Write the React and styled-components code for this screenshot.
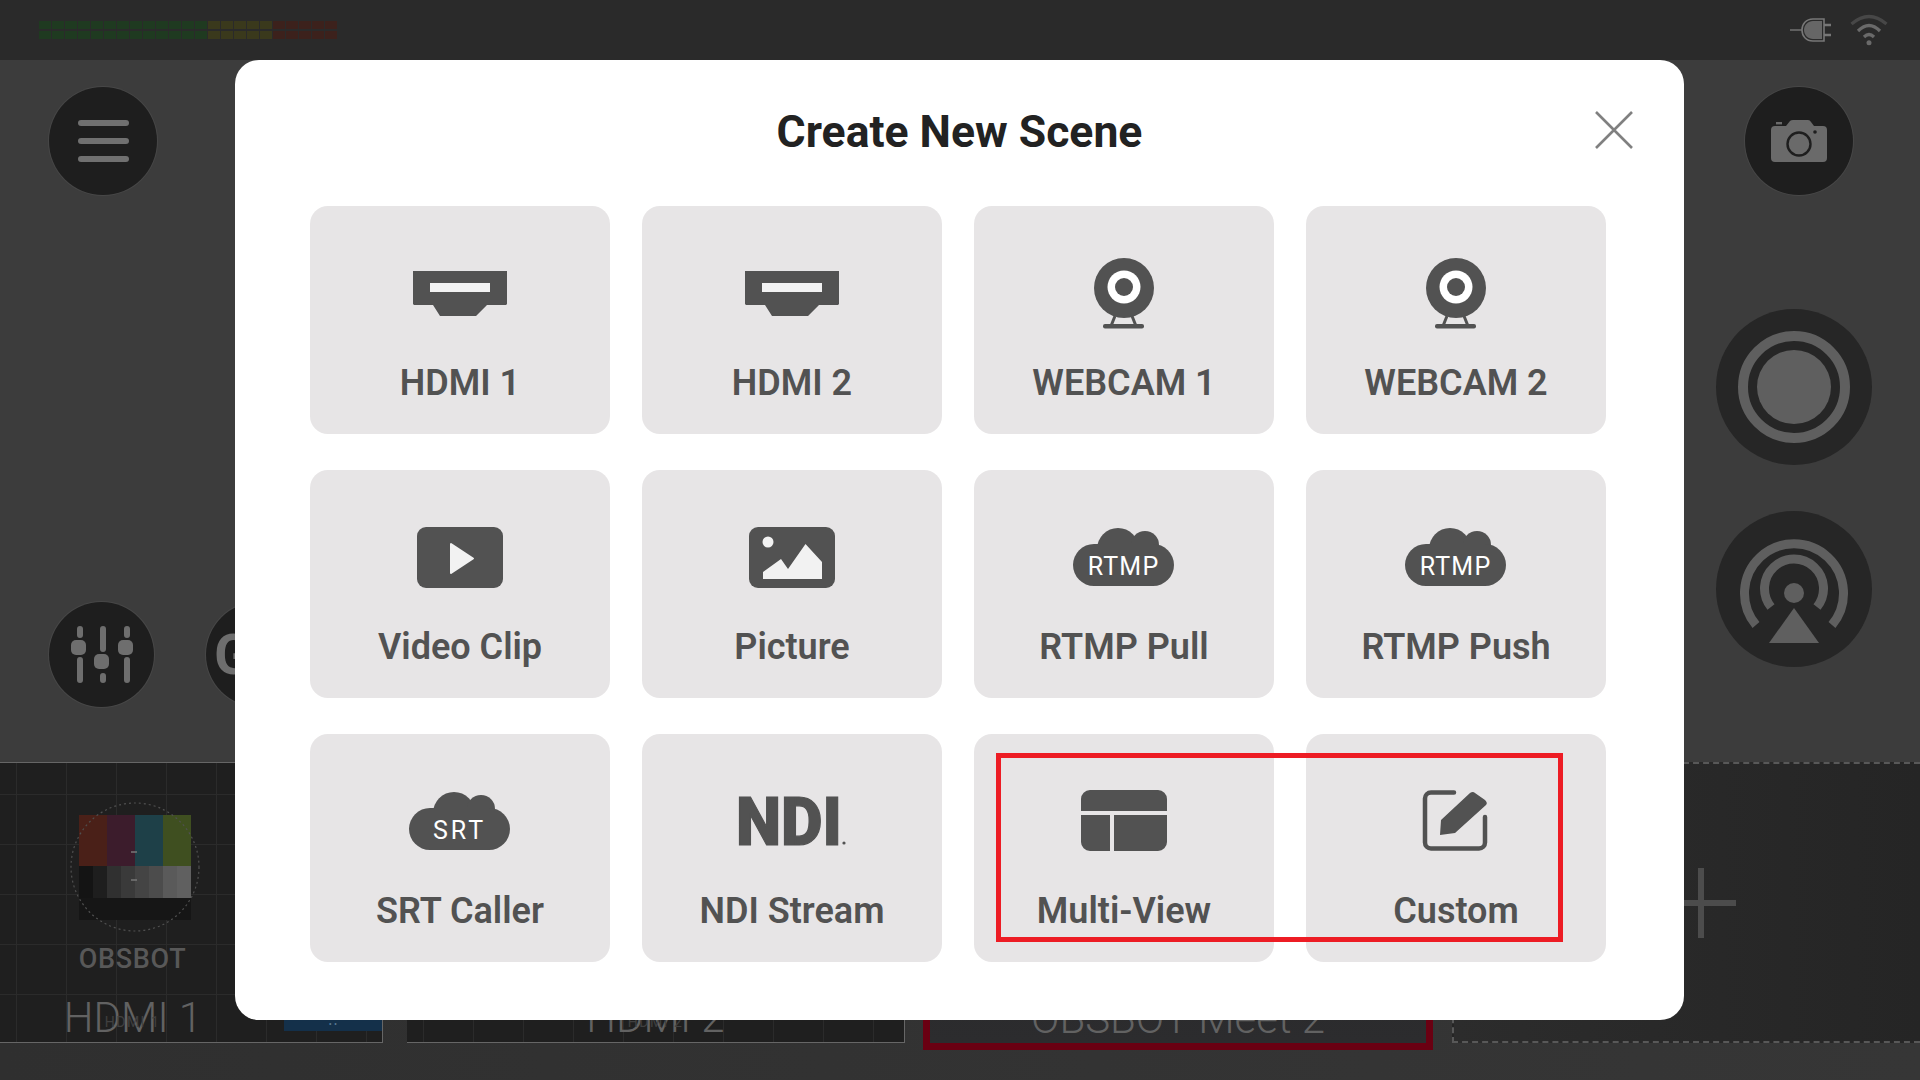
import React from 'react';
import styled, { createGlobalStyle } from 'styled-components';

const GlobalStyle = createGlobalStyle`
  html, body {
    margin: 0;
    padding: 0;
    background: #333;
    font-family: Roboto, "Liberation Sans", sans-serif;
  }
`;

const DARK = '#525252';
const CARD = '#e7e5e6';

const HdmiIcon = () => (
  <IconSvg viewBox="0 0 110 90">
    <path fill={DARK} d="M8 23H102V56l-1 1H82L71 68H35L28 57H9l-1-1Z" />
    <rect x="25" y="35" width="60" height="9" fill="#f2f2f2" />
  </IconSvg>
);

const WebcamIcon = () => (
  <IconSvg viewBox="0 0 110 90">
    <circle cx="55" cy="40" r="30" fill={DARK} />
    <circle cx="55" cy="39" r="16.5" fill="#fff" />
    <circle cx="55" cy="39" r="9" fill={DARK} />
    <path stroke={DARK} strokeWidth="3" fill="none" d="M46 68l-4 10M63 68l4 10" />
    <rect x="34" y="76" width="41" height="4.5" rx="2" fill={DARK} />
  </IconSvg>
);

const ClipIcon = () => (
  <IconSvg viewBox="0 0 110 90">
    <rect x="12" y="15" width="86" height="61" rx="9" fill={DARK} />
    <path
      fill="#f2f2f2"
      stroke="#f2f2f2"
      strokeWidth="2"
      strokeLinejoin="round"
      d="M46 32V61L68 46.5Z"
    />
  </IconSvg>
);

const PictureIcon = () => (
  <IconSvg viewBox="0 0 110 90">
    <rect x="12" y="15" width="86" height="61" rx="9" fill={DARK} />
    <ellipse cx="31" cy="30" rx="5.5" ry="5.5" fill="#f2f2f2" />
    <path fill="#f2f2f2" d="M26 67V60L44 47 51 57 68.5 32 85 50V67Z" />
  </IconSvg>
);

const CloudIcon = ({ text, spacing }) => (
  <IconSvg viewBox="0 0 110 90">
    <circle cx="49" cy="37" r="21" fill={DARK} />
    <circle cx="76" cy="33" r="14" fill={DARK} />
    <rect x="4" y="32" width="101" height="42" rx="21" fill={DARK} />
    <IconText x="54.5" y="63" textAnchor="middle" fontSize="25" letterSpacing={spacing}>
      {text}
    </IconText>
  </IconSvg>
);

const NdiIcon = () => (
  <IconSvg viewBox="0 0 110 90">
    <NdiText x="-1" y="69" textLength="106" lengthAdjust="spacingAndGlyphs">
      NDI
    </NdiText>
    <circle cx="107" cy="67" r="1.6" fill={DARK} />
  </IconSvg>
);

const MultiViewIcon = () => (
  <IconSvg viewBox="0 0 110 90">
    <path
      fill={DARK}
      d="M21 14H89a9 9 0 0 1 9 9V35H12V23a9 9 0 0 1 9-9ZM12 39H41V75H21a9 9 0 0 1-9-9ZM45 39H98V66a9 9 0 0 1-9 9H45Z"
    />
  </IconSvg>
);

const CustomIcon = () => (
  <IconSvg viewBox="0 0 110 90">
    <path
      fill="none"
      stroke={DARK}
      strokeWidth="4.5"
      strokeLinecap="round"
      d="M53 16.5H30a6 6 0 0 0-6 6V66.5a6 6 0 0 0 6 6H78a6 6 0 0 0 6-6V41"
    />
    <path
      fill={DARK}
      d="M39 59 40 44 69 17q3-2 5 0l10 7q3 3 1 5L54 57Z"
    />
  </IconSvg>
);

const sources = [
  { label: 'HDMI 1', icon: <HdmiIcon /> },
  { label: 'HDMI 2', icon: <HdmiIcon /> },
  { label: 'WEBCAM 1', icon: <WebcamIcon /> },
  { label: 'WEBCAM 2', icon: <WebcamIcon /> },
  { label: 'Video Clip', icon: <ClipIcon /> },
  { label: 'Picture', icon: <PictureIcon /> },
  { label: 'RTMP Pull', icon: <CloudIcon text="RTMP" spacing={1.2} /> },
  { label: 'RTMP Push', icon: <CloudIcon text="RTMP" spacing={1.2} /> },
  { label: 'SRT Caller', icon: <CloudIcon text="SRT" spacing={3} /> },
  { label: 'NDI Stream', icon: <NdiIcon /> },
  { label: 'Multi-View', icon: <MultiViewIcon /> },
  { label: 'Custom', icon: <CustomIcon /> },
];

const meterColors = [
  ...Array(13).fill('#1f3a20'),
  ...Array(5).fill('#3a391c'),
  ...Array(5).fill('#3c211c'),
];

const App = () => {
  return (
    <Page>
      <GlobalStyle />
      <TopBar>
        <Meter>
          {[0, 1].map(row =>
            meterColors.map((color, i) => <Segment key={`${row}-${i}`} $color={color} />)
          )}
        </Meter>
        <StatusIcons>
          <svg width="42" height="24" viewBox="0 0 42 24">
            <path stroke="#6e6e6e" strokeWidth="1.6" d="M0 12H12" fill="none" />
            <path
              fill="none"
              stroke="#777"
              strokeWidth="1.6"
              d="M34 1H23C16 1 12 6 12 12s4 11 11 11H34Z"
            />
            <path fill="#666" d="M32 3H23C18 3 14 7 14 12s4 9 9 9H32Z" />
            <path stroke="#777" strokeWidth="2.6" d="M34 7h7M34 17h7" fill="none" />
          </svg>
          <svg width="38" height="32" viewBox="0 0 38 32" fill="none">
            <path stroke="#474747" strokeWidth="3.2" d="M1.5 10Q19 -5 36.5 10" />
            <path stroke="#6a6a6a" strokeWidth="3.2" d="M8 17Q19 6 30 17" />
            <path stroke="#6a6a6a" strokeWidth="3.2" d="M14 23Q19 18 24 23" />
            <circle cx="19" cy="28.7" r="2.5" fill="#6a6a6a" />
          </svg>
        </StatusIcons>
      </TopBar>

      <Middle>
        <LeftRail>
          <MenuButton>
            <MenuBar />
            <MenuBar />
            <MenuBar />
          </MenuButton>
          <ToolRow>
            <ToolButton>
              <svg width="62" height="58" viewBox="0 0 62 58" fill="#6e6e6e">
                <rect x="6" y="0" width="6" height="12" rx="3" />
                <rect x="6" y="31" width="6" height="26" rx="3" />
                <rect x="0" y="14" width="15" height="15" rx="5" />
                <rect x="29" y="0" width="6" height="26" rx="3" />
                <rect x="29" y="47" width="6" height="10" rx="3" />
                <rect x="23" y="28" width="15" height="15" rx="5" />
                <rect x="53" y="0" width="6" height="12" rx="3" />
                <rect x="53" y="31" width="6" height="26" rx="3" />
                <rect x="47" y="14" width="15" height="15" rx="5" />
              </svg>
            </ToolButton>
            <ToolButton $start>
              <GoLetter>G</GoLetter>
            </ToolButton>
          </ToolRow>
        </LeftRail>

        <RightRail>
          <CameraButton>
            <svg width="56" height="42" viewBox="0 0 56 42">
              <path
                fill="#6a6a6a"
                d="M4 6H15L19 1Q20 0 22 0H37Q39 0 40 2L43 6H52Q56 6 56 10V38Q56 42 52 42H4Q0 42 0 38V10Q0 6 4 6Z"
              />
              <rect x="5" y="2" width="6" height="2.4" fill="#6a6a6a" />
              <circle cx="28" cy="24" r="11.5" fill="none" stroke="#1e1e1e" strokeWidth="2.4" />
              <circle cx="44" cy="12" r="1.8" fill="#1e1e1e" />
            </svg>
          </CameraButton>
          <BigButton $top={114}>
            <svg width="112" height="112" viewBox="0 0 112 112">
              <circle cx="56" cy="56" r="51" fill="none" stroke="#5f5f5f" strokeWidth="10" />
              <circle cx="56" cy="56" r="37" fill="#5f5f5f" />
            </svg>
          </BigButton>
          <BigButton $top={46}>
            <svg width="112" height="112" viewBox="0 0 112 112" fill="none">
              <path stroke="#5f5f5f" strokeWidth="9" d="M18 92A49.5 49.5 0 1 1 94 92" />
              <path stroke="#5f5f5f" strokeWidth="9" d="M33 74A29.5 29.5 0 1 1 79 74" />
              <circle cx="56" cy="60" r="10" fill="#5f5f5f" />
              <path fill="#5f5f5f" d="M56 75 81 110H31Z" />
            </svg>
          </BigButton>
        </RightRail>
      </Middle>

      <Footer>
        <Strip>
          <Thumb $width={383} $gap={24}>
            <ThumbInner>
              <svg width="140" height="135" viewBox="0 0 140 135">
                <rect x="16" y="15" width="28" height="51" fill="#4a2018" />
                <rect x="44" y="15" width="28" height="51" fill="#3c1c2c" />
                <rect x="72" y="15" width="28" height="51" fill="#1e4048" />
                <rect x="100" y="15" width="28" height="51" fill="#3f4f20" />
                {['#141414', '#1e1e1e', '#303030', '#3a3a3a', '#444', '#4c4c4c', '#5a5a5a', '#606060'].map((c, i) => (
                  <rect key={c} x={16 + i * 14} y="66" width="14" height="32" fill={c} />
                ))}
                <rect x="16" y="98" width="112" height="22" fill="#161616" />
                <path d="M68 52h6M68 80h6" stroke="#777" strokeWidth="1.5" />
                <circle cx="72" cy="67" r="64" fill="none" stroke="#505050" strokeWidth="1.2" strokeDasharray="2 3" />
              </svg>
              <LogoText>OBSBOT</LogoText>
              <ThumbLabel $shift={1}>HDMI 1</ThumbLabel>
              <TinyLabel>HDMI 1</TinyLabel>
            </ThumbInner>
            <SignalBadge>• •</SignalBadge>
          </Thumb>
          <Thumb $width={498} $gap={18}>
            <ThumbLabel>HDMI 2</ThumbLabel>
            <TinyLabel>HDMI 2</TinyLabel>
          </Thumb>
          <LiveThumb>
            <ThumbLabel>OBSBOT Meet 2</ThumbLabel>
          </LiveThumb>
          <AddThumb>
            <svg width="70" height="70" viewBox="0 0 70 70">
              <path d="M35 0V70M0 35H70" stroke="#4c4c4c" strokeWidth="6" />
            </svg>
          </AddThumb>
        </Strip>
      </Footer>

      <Modal>
        <Title>Create New Scene</Title>
        <CloseButton>
          <svg width="38" height="38" viewBox="0 0 38 38">
            <path d="M1 1 37 37M37 1 1 37" stroke="#808080" strokeWidth="2.6" />
          </svg>
        </CloseButton>
        <SourceGrid>
          {sources.map(({ label, icon }) => (
            <SourceCard key={label}>
              {icon}
              <SourceLabel>{label}</SourceLabel>
            </SourceCard>
          ))}
        </SourceGrid>
        <Highlight />
      </Modal>
    </Page>
  );
};

const Page = styled.div`
  position: relative;
  display: flex;
  flex-direction: column;
  width: 1920px;
  height: 1080px;
  overflow: hidden;
`;

const TopBar = styled.header`
  display: flex;
  align-items: center;
  justify-content: space-between;
  height: 60px;
  padding: 0 32px 0 39px;
  box-sizing: border-box;
  background: #2a2a2a;
`;

const Meter = styled.div`
  display: grid;
  grid-template-columns: repeat(23, 12px);
  grid-template-rows: 8px 8px;
  column-gap: 1px;
  row-gap: 2px;
`;

const Segment = styled.span`
  background: ${({ $color }) => $color};
`;

const StatusIcons = styled.div`
  display: flex;
  align-items: center;
  gap: 18px;
`;

const Middle = styled.main`
  flex: 1;
  display: flex;
  justify-content: space-between;
  background: #3c3c3c;
`;

const LeftRail = styled.div`
  display: flex;
  flex-direction: column;
  justify-content: space-between;
  padding: 27px 0 55px 49px;
`;

const MenuButton = styled.button`
  display: flex;
  flex-direction: column;
  align-items: center;
  justify-content: center;
  gap: 12px;
  width: 108px;
  height: 108px;
  padding: 0;
  border: none;
  border-radius: 50%;
  background: #1e1e1e;
  box-shadow: 0 0 0 1px #474747;
`;

const MenuBar = styled.span`
  width: 51px;
  height: 6px;
  border-radius: 3px;
  background: #707070;
`;

const ToolRow = styled.div`
  display: flex;
  gap: 52px;
`;

const ToolButton = styled.button`
  display: flex;
  align-items: center;
  justify-content: ${({ $start }) => ($start ? 'flex-start' : 'center')};
  width: 105px;
  height: 105px;
  padding: 0 0 0 ${({ $start }) => ($start ? '8px' : '0')};
  border: none;
  border-radius: 50%;
  background: #1e1e1e;
  box-shadow: 0 0 0 1px #474747;
`;

const GoLetter = styled.span`
  font-family: Roboto, sans-serif;
  font-size: 56px;
  font-weight: 700;
  color: #6e6e6e;
`;

const RightRail = styled.div`
  display: flex;
  flex-direction: column;
  align-items: center;
  width: 156px;
  padding: 27px 48px 0 0;
`;

const CameraButton = styled.button`
  display: flex;
  align-items: center;
  justify-content: center;
  width: 108px;
  height: 108px;
  margin-left: 10px;
  padding: 0;
  border: none;
  border-radius: 50%;
  background: #1e1e1e;
  box-shadow: 0 0 0 1px #474747;
`;

const BigButton = styled.div`
  display: flex;
  align-items: center;
  justify-content: center;
  width: 156px;
  height: 156px;
  margin-top: ${({ $top }) => $top}px;
  border-radius: 50%;
  background: #262626;
`;

const Footer = styled.footer`
  padding-bottom: 37px;
  background: linear-gradient(90deg, #2f2f2f, #363636);
`;

const Strip = styled.div`
  display: flex;
  height: 281px;
`;

const Thumb = styled.div`
  position: relative;
  flex: none;
  display: flex;
  flex-direction: column;
  align-items: center;
  justify-content: flex-end;
  width: ${({ $width }) => $width}px;
  margin-right: ${({ $gap }) => $gap}px;
  box-sizing: border-box;
  border-top: 1px solid #666;
  border-bottom: 1px solid #666;
  border-right: 1px solid #666;
  background-color: #1f1f1f;
  background-image:
    linear-gradient(#2b2b2b 1px, transparent 1px),
    linear-gradient(90deg, #2b2b2b 1px, transparent 1px);
  background-size: 50px 50px;
  background-position: 16px 31px;
`;

const ThumbInner = styled.div`
  position: relative;
  align-self: flex-start;
  display: flex;
  flex-direction: column;
  align-items: center;
  width: 265px;
  height: 100%;
  padding-top: 37px;
  box-sizing: border-box;
`;

const LogoText = styled.div`
  margin-top: 7px;
  font-size: 27px;
  line-height: 34px;
  font-weight: 500;
  letter-spacing: 0.7px;
  color: #585858;
`;

const ThumbLabel = styled.div`
  margin-top: auto;
  margin-left: ${({ $shift }) => $shift || 0}px;
  font-size: 42px;
  line-height: 48px;
  font-weight: 300;
  color: #626262;
  white-space: nowrap;
`;

const TinyLabel = styled.div`
  position: absolute;
  left: 0;
  right: 0;
  bottom: 12px;
  text-align: center;
  font-size: 14px;
  letter-spacing: 1.5px;
  color: #404040;
`;

const SignalBadge = styled.div`
  position: absolute;
  right: 0;
  bottom: 11px;
  width: 98px;
  height: 13px;
  font-size: 9px;
  line-height: 13px;
  text-align: center;
  color: #5a7a94;
  background: #14304a;
`;

const LiveThumb = styled.div`
  flex: none;
  display: flex;
  justify-content: center;
  align-items: flex-end;
  width: 510px;
  margin: -7px 19px -7px 0;
  box-sizing: border-box;
  border: 7px solid #6a0012;
  background: linear-gradient(#262626, #2c2c2e);
`;

const AddThumb = styled.div`
  flex: 1;
  display: flex;
  align-items: center;
  justify-content: center;
  padding-left: 28px;
  box-sizing: border-box;
  border: 2px dashed #585858;
  border-right: none;
  background: linear-gradient(90deg, #2c2c2c, #252525);
`;

const Modal = styled.section`
  position: absolute;
  left: 235px;
  top: 60px;
  display: flex;
  flex-direction: column;
  width: 1449px;
  height: 960px;
  border-radius: 24px;
  background: #fff;
`;

const Title = styled.h1`
  margin: 0;
  height: 146px;
  padding-top: 44px;
  box-sizing: border-box;
  text-align: center;
  font-size: 44.5px;
  line-height: 56px;
  font-weight: 700;
  color: #222;
`;

const CloseButton = styled.div`
  position: absolute;
  top: 51px;
  right: 51px;
  line-height: 0;
`;

const SourceGrid = styled.div`
  display: grid;
  grid-template-columns: repeat(4, 300px);
  grid-auto-rows: 228px;
  gap: 36px 32px;
  padding-left: 75px;
`;

const SourceCard = styled.div`
  display: flex;
  flex-direction: column;
  align-items: center;
  padding-top: 42px;
  box-sizing: border-box;
  border-radius: 18px;
  background: ${CARD};
`;

const IconSvg = styled.svg`
  flex: none;
  width: 110px;
  height: 90px;
`;

const IconText = styled.text`
  font-family: Roboto, sans-serif;
  font-weight: 400;
  fill: #fff;
`;

const NdiText = styled.text`
  font-family: Roboto, sans-serif;
  font-size: 67px;
  font-weight: 900;
  fill: ${DARK};
  stroke: ${DARK};
  stroke-width: 1.2px;
`;

const SourceLabel = styled.div`
  margin-top: 23px;
  font-size: 36px;
  line-height: 44px;
  font-weight: 600;
  color: ${DARK};
  white-space: nowrap;
`;

const Highlight = styled.div`
  position: absolute;
  left: 761px;
  top: 693px;
  width: 567px;
  height: 189px;
  box-sizing: border-box;
  border: 5px solid #ed1c24;
`;

export default App;
